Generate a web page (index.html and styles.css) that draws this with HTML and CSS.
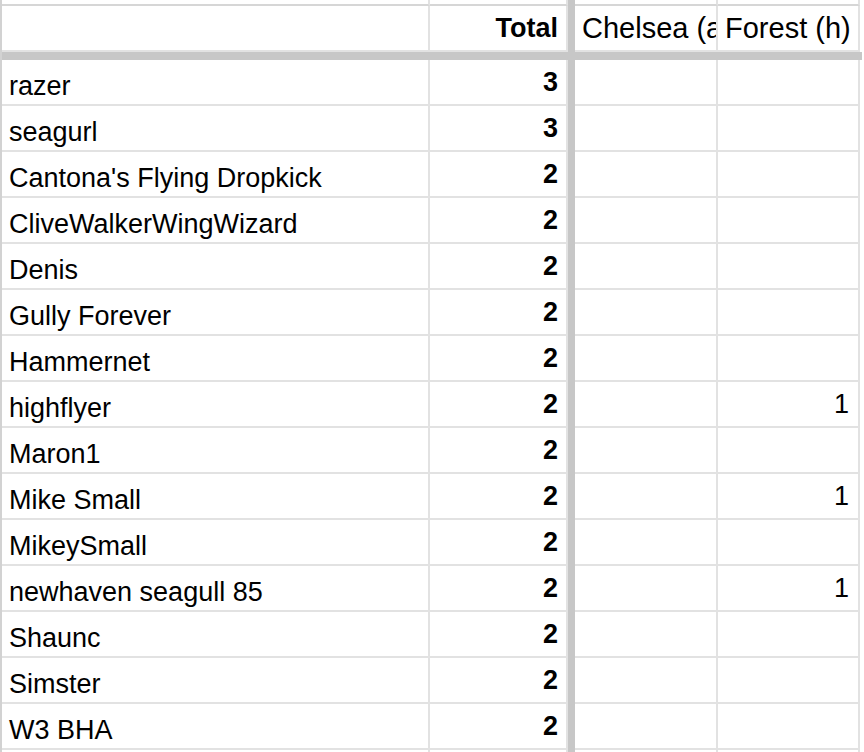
FILE: index.html
```html
<!DOCTYPE html>
<html>
<head>
<meta charset="utf-8">
<link rel="stylesheet" href="styles.css">
</head>
<body>
<div class="sheet">
  <div class="row top">
    <div class="cell name"></div><div class="cell total"></div><div class="sep"></div><div class="cell team"></div><div class="cell team"></div>
  </div>
  <div class="row head">
    <div class="cell name"></div>
    <div class="cell total num">Total</div>
    <div class="sep"></div>
    <div class="cell team txt">Chelsea (a</div>
    <div class="cell team txt">Forest (h)</div>
  </div>
  <div class="freeze"></div>
  <div class="row"><div class="cell name">razer</div><div class="cell total num">3</div><div class="sep"></div><div class="cell team"></div><div class="cell team val"></div></div>
  <div class="row"><div class="cell name">seagurl</div><div class="cell total num">3</div><div class="sep"></div><div class="cell team"></div><div class="cell team val"></div></div>
  <div class="row"><div class="cell name">Cantona's Flying Dropkick</div><div class="cell total num">2</div><div class="sep"></div><div class="cell team"></div><div class="cell team val"></div></div>
  <div class="row"><div class="cell name">CliveWalkerWingWizard</div><div class="cell total num">2</div><div class="sep"></div><div class="cell team"></div><div class="cell team val"></div></div>
  <div class="row"><div class="cell name">Denis</div><div class="cell total num">2</div><div class="sep"></div><div class="cell team"></div><div class="cell team val"></div></div>
  <div class="row"><div class="cell name">Gully Forever</div><div class="cell total num">2</div><div class="sep"></div><div class="cell team"></div><div class="cell team val"></div></div>
  <div class="row"><div class="cell name">Hammernet</div><div class="cell total num">2</div><div class="sep"></div><div class="cell team"></div><div class="cell team val"></div></div>
  <div class="row"><div class="cell name">highflyer</div><div class="cell total num">2</div><div class="sep"></div><div class="cell team"></div><div class="cell team val">1</div></div>
  <div class="row"><div class="cell name">Maron1</div><div class="cell total num">2</div><div class="sep"></div><div class="cell team"></div><div class="cell team val"></div></div>
  <div class="row"><div class="cell name">Mike Small</div><div class="cell total num">2</div><div class="sep"></div><div class="cell team"></div><div class="cell team val">1</div></div>
  <div class="row"><div class="cell name">MikeySmall</div><div class="cell total num">2</div><div class="sep"></div><div class="cell team"></div><div class="cell team val"></div></div>
  <div class="row"><div class="cell name">newhaven seagull 85</div><div class="cell total num">2</div><div class="sep"></div><div class="cell team"></div><div class="cell team val">1</div></div>
  <div class="row"><div class="cell name">Shaunc</div><div class="cell total num">2</div><div class="sep"></div><div class="cell team"></div><div class="cell team val"></div></div>
  <div class="row"><div class="cell name">Simster</div><div class="cell total num">2</div><div class="sep"></div><div class="cell team"></div><div class="cell team val"></div></div>
  <div class="row"><div class="cell name">W3 BHA</div><div class="cell total num">2</div><div class="sep"></div><div class="cell team"></div><div class="cell team val"></div></div>
  <div class="row tail"><div class="cell name"></div><div class="cell total"></div><div class="sep"></div><div class="cell team"></div><div class="cell team"></div></div>
</div>
</body>
</html>
```

FILE: styles.css
```css
* { box-sizing: border-box; }
html, body { margin: 0; padding: 0; background: #fff; }
body {
  width: 864px;
  height: 752px;
  overflow: hidden;
  font-family: "Liberation Sans", Arial, Helvetica, sans-serif;
  color: #000;
}
.sheet {
  width: 862px;
  border-left: 2px solid #d2d2d2;
}
.row {
  display: flex;
  height: 46px;
}
.cell {
  height: 46px;
  border-right: 2px solid #e2e2e2;
  border-bottom: 2px solid #e2e2e2;
  display: flex;
  align-items: flex-end;
  font-size: 27px;
  line-height: 27px;
  white-space: nowrap;
  overflow: hidden;
  padding: 0 7px 4px 7px;
}
.name { width: 428px; }
.total { width: 138px; justify-content: flex-end; }
.sep { width: 7px; background: #c7c7c7; flex: none; }
.team { width: 143px; }
.team + .team { width: 142px; }
.num { font-weight: bold; padding-bottom: 8px; padding-right: 8px; }
.val { justify-content: flex-end; padding-bottom: 8px; padding-right: 9px; }
.row.top { height: 6px; }
.row.top .cell { height: 6px; border-bottom-color: #d6d6d6; }
.row.head .cell { padding-bottom: 8px; }
.row.head .txt { font-size: 29px; padding-left: 7px; }
.row.tail { height: 4px; }
.row.tail .cell { height: 4px; border-bottom: 0; }
.freeze {
  height: 8px;
  background: #c7c7c7;
}
```
